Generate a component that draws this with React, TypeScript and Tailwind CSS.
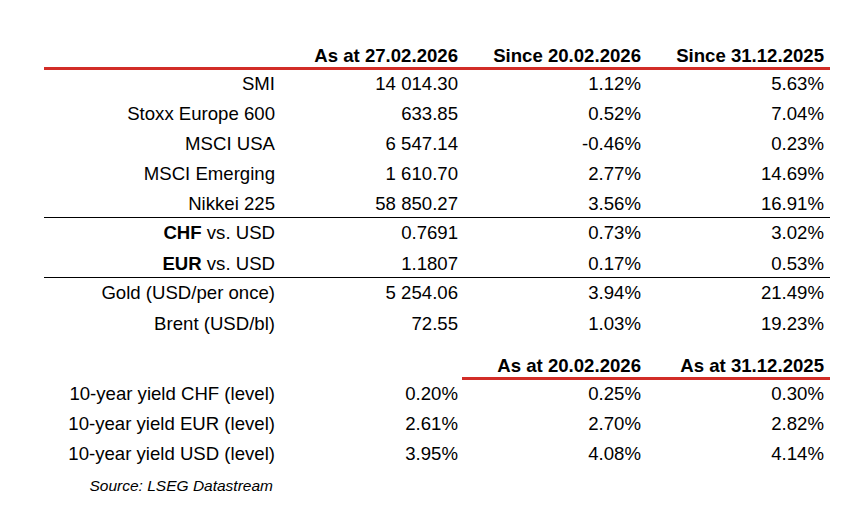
import React from "react";

type Row = {
  label: React.ReactNode;
  values: [string, string, string];
  line?: "red" | "black";
};

const markets: Row[] = [
  { label: "SMI", values: ["14 014.30", "1.12%", "5.63%"], line: "red" },
  { label: "Stoxx Europe 600", values: ["633.85", "0.52%", "7.04%"] },
  { label: "MSCI USA", values: ["6 547.14", "-0.46%", "0.23%"] },
  { label: "MSCI Emerging", values: ["1 610.70", "2.77%", "14.69%"] },
  { label: "Nikkei 225", values: ["58 850.27", "3.56%", "16.91%"] },
  {
    label: (
      <>
        <b>CHF</b> vs. USD
      </>
    ),
    values: ["0.7691", "0.73%", "3.02%"],
    line: "black",
  },
  {
    label: (
      <>
        <b>EUR</b> vs. USD
      </>
    ),
    values: ["1.1807", "0.17%", "0.53%"],
  },
  { label: "Gold (USD/per once)", values: ["5 254.06", "3.94%", "21.49%"], line: "black" },
  { label: "Brent (USD/bl)", values: ["72.55", "1.03%", "19.23%"] },
];

const yields: Row[] = [
  { label: "10-year yield CHF (level)", values: ["0.20%", "0.25%", "0.30%"] },
  { label: "10-year yield EUR (level)", values: ["2.61%", "2.70%", "2.82%"] },
  { label: "10-year yield USD (level)", values: ["3.95%", "4.08%", "4.14%"] },
];

const pads = ["pr-[5px]", "pr-[4px]", "pr-[4px]", "pr-[6px]"];

function Cell({
  children,
  col,
  line,
}: {
  children: React.ReactNode;
  col: number;
  line?: "red" | "black";
}) {
  const border =
    line === "red"
      ? "border-t-[3px] border-[#d22d27] leading-[27px]"
      : line === "black"
      ? "border-t border-black leading-[30px]"
      : "leading-[33px]";
  return <div className={`h-[30px] text-right ${pads[col]} ${border}`}>{children}</div>;
}

function HeaderRow({ labels, from }: { labels: string[]; from: number }) {
  return (
    <>
      {[0, 1, 2, 3].map((col) => (
        <div key={col} className={`flex h-full items-end justify-end font-bold leading-[22px] ${pads[col]}`}>
          {col >= from ? labels[col - from] : ""}
        </div>
      ))}
    </>
  );
}

export default function App() {
  return (
    <div className="min-h-[526px] w-[854px] bg-white font-['Liberation_Sans',Arial,sans-serif] text-[18.6px] text-black">
      <div className="ml-[44px] w-[786px] pt-[45px]">
        <div className="grid h-[22px] grid-cols-[236px_182px_183px_185px]">
          <HeaderRow labels={["As at 27.02.2026", "Since 20.02.2026", "Since 31.12.2025"]} from={1} />
        </div>
        <div className="grid grid-cols-[236px_182px_183px_185px]">
          {markets.map((r, i) => (
            <React.Fragment key={i}>
              <Cell col={0} line={r.line}>
                {r.label}
              </Cell>
              {r.values.map((v, j) => (
                <Cell key={j} col={j + 1} line={r.line}>
                  {v}
                </Cell>
              ))}
            </React.Fragment>
          ))}
        </div>
        <div className="grid h-[40px] grid-cols-[236px_182px_183px_185px]">
          <HeaderRow labels={["As at 20.02.2026", "As at 31.12.2025"]} from={2} />
        </div>
        <div className="grid grid-cols-[236px_182px_183px_185px]">
          {yields.map((r, i) => (
            <React.Fragment key={i}>
              <Cell col={0}>{r.label}</Cell>
              {r.values.map((v, j) => (
                <Cell key={j} col={j + 1} line={i === 0 && j >= 1 ? "red" : undefined}>
                  {v}
                </Cell>
              ))}
            </React.Fragment>
          ))}
        </div>
        <div className="w-[236px] pr-[7px] text-right text-[15.5px] italic leading-[38px]">
          Source: LSEG Datastream
        </div>
      </div>
    </div>
  );
}
